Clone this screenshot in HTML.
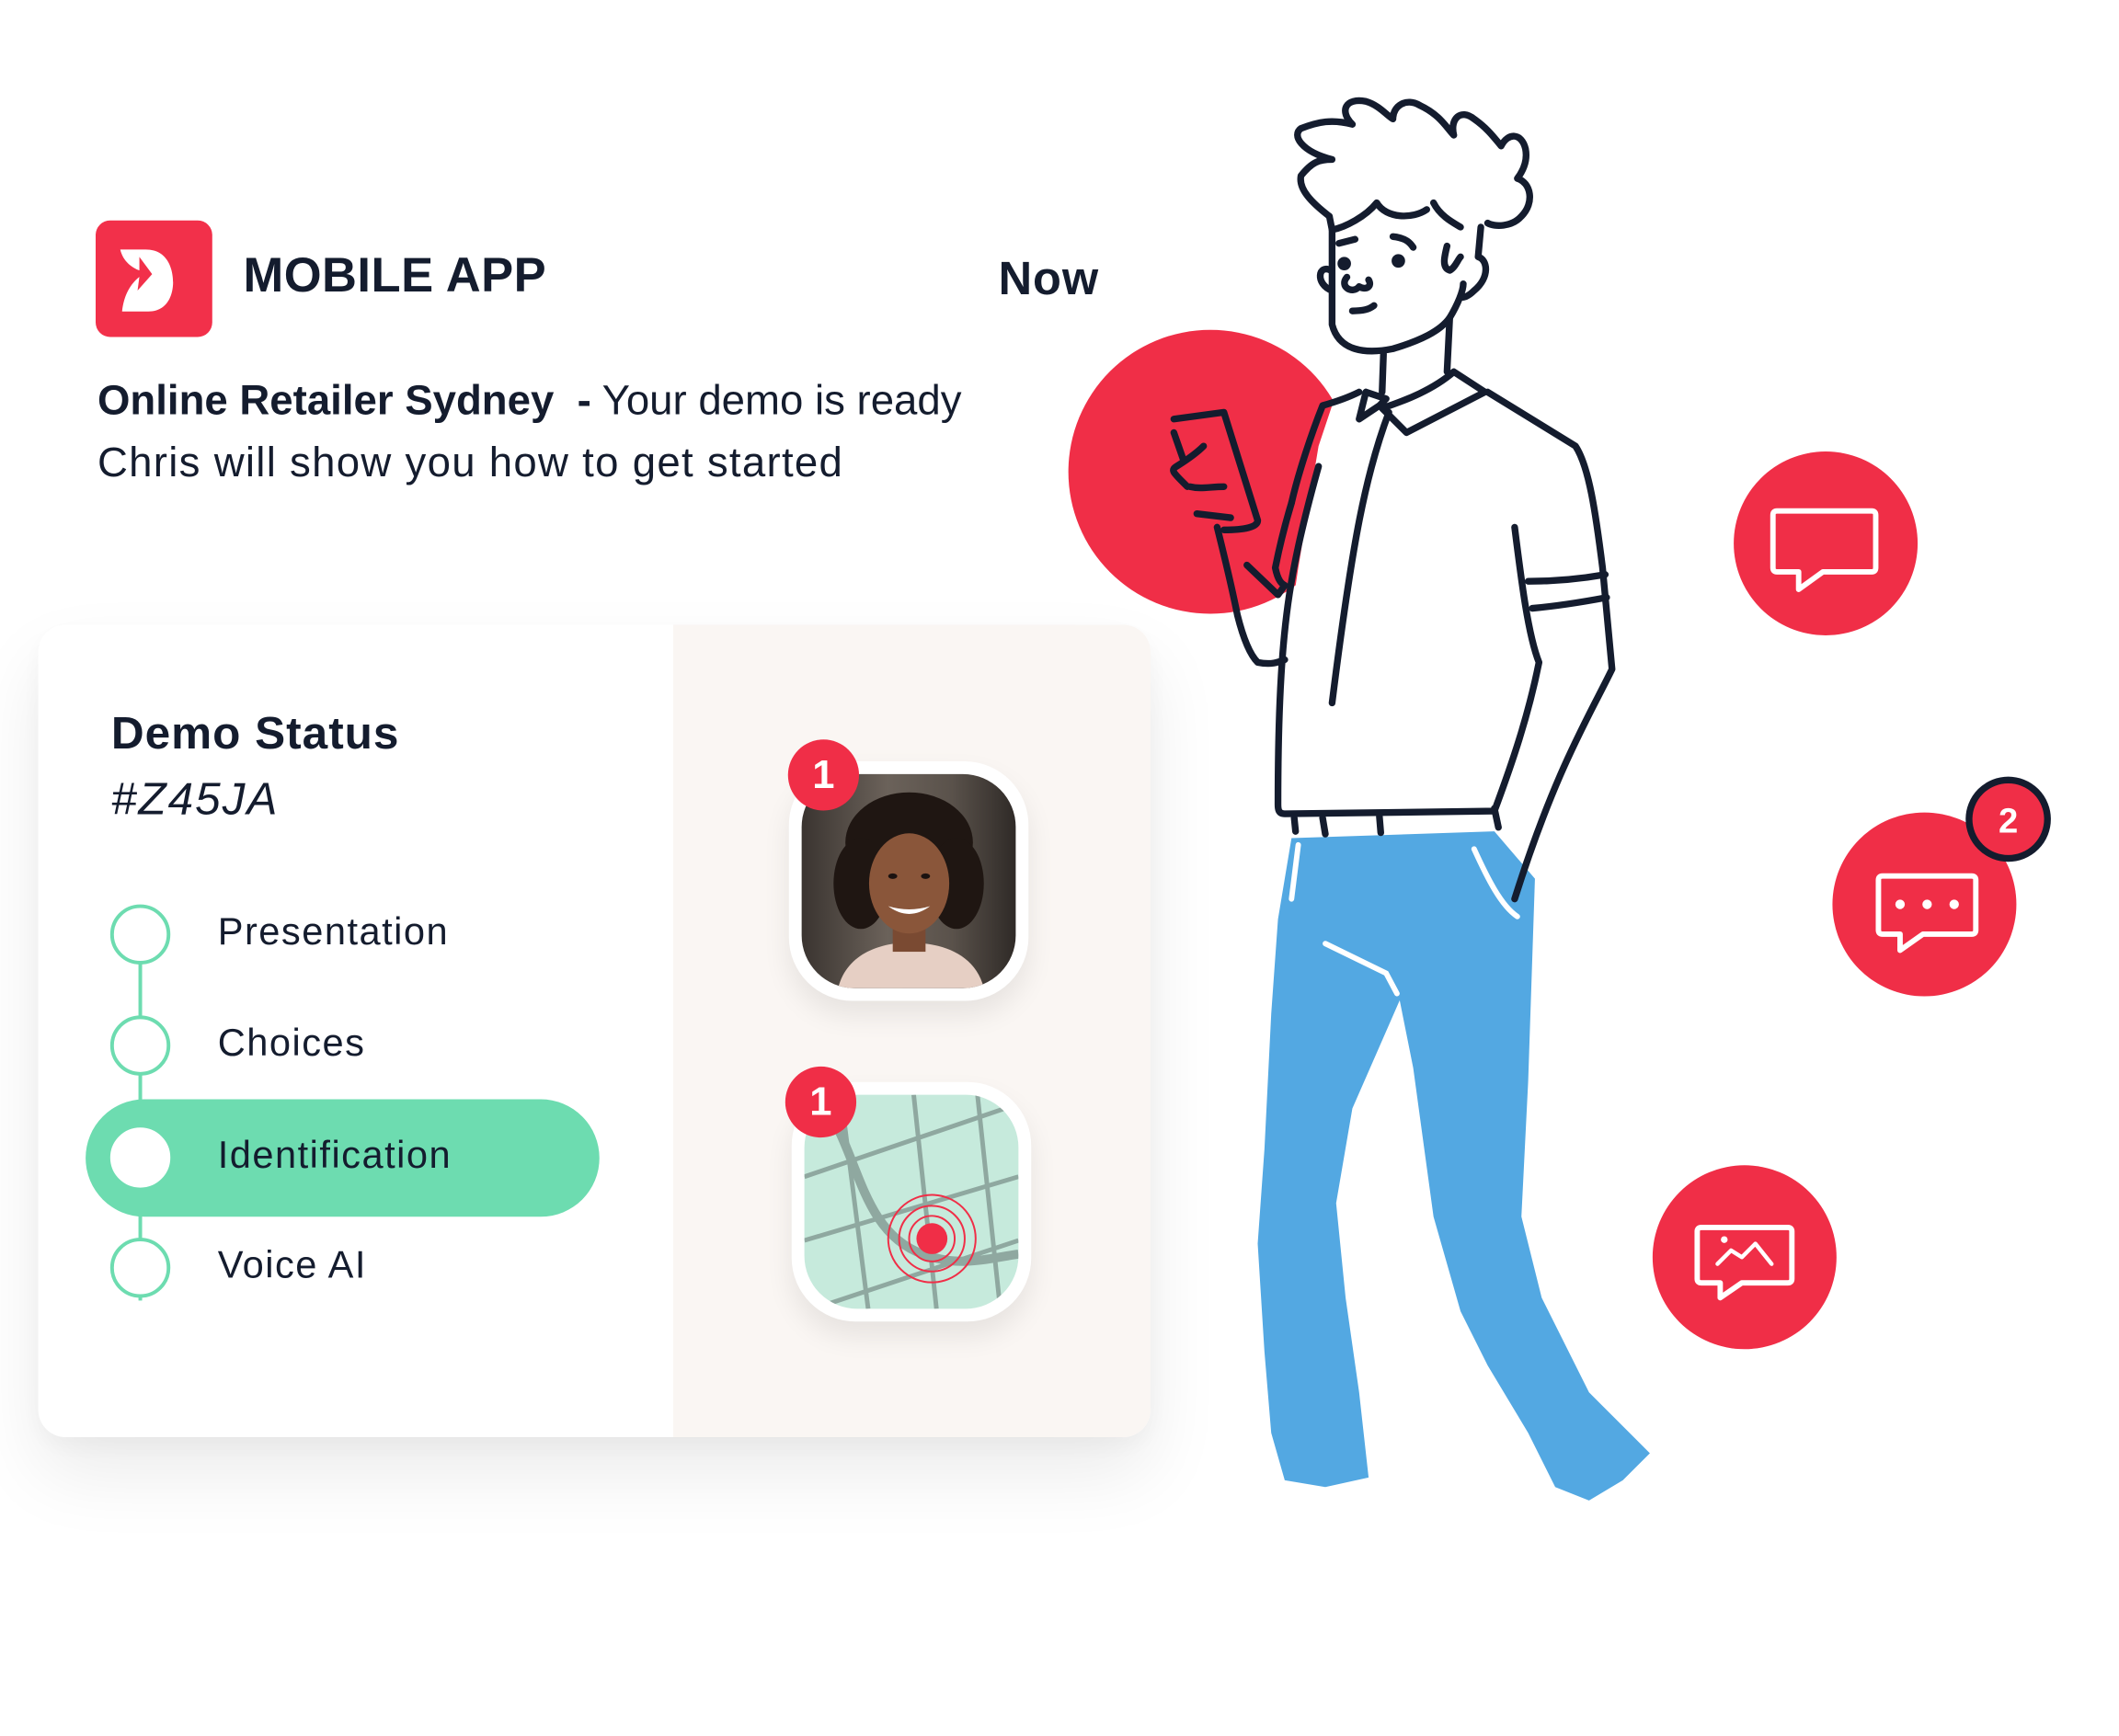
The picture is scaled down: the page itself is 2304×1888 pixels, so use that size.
<!DOCTYPE html>
<html><head><meta charset="utf-8"><style>
*{margin:0;padding:0;box-sizing:border-box}
body{width:2304px;height:1888px;background:#fff;position:relative;overflow:hidden;font-family:"Liberation Sans",sans-serif;color:#141c2e}
#w{position:absolute;left:0;top:0;width:2304px;height:1888px;transform:scale(0.9905);transform-origin:0 0}
.a{position:absolute;white-space:nowrap}
.card{position:absolute;left:42px;top:686px;width:1221px;height:892px;border-radius:30px;background:#fff;overflow:hidden;box-shadow:0 40px 80px rgba(0,0,0,.08),0 10px 30px rgba(0,0,0,.04)}
.card .r{position:absolute;left:697px;top:0;right:0;bottom:0;background:#faf6f3}
.step{position:absolute;left:79px;width:66px;height:66px;border-radius:50%;border:4px solid #6ddcb0;background:#fff}
.lbl{position:absolute;left:197px;font-size:42px;letter-spacing:1.5px}
.tile{position:absolute;width:263px;height:263px;border-radius:70px;background:#fff;box-shadow:0 16px 30px rgba(0,0,0,.08)}
.tile .in{position:absolute;left:14px;top:14px;right:14px;bottom:14px;border-radius:58px;overflow:hidden}
.badge{position:absolute;width:78px;height:78px;border-radius:50%;background:#f02e47;color:#fff;font-weight:bold;font-size:44px;text-align:center;line-height:78px}
</style></head><body><div id="w">

<div class="a" style="left:105px;top:242px;width:128px;height:128px;border-radius:16px;background:#f2304a">
<svg width="128" height="128" viewBox="0 0 128 128"><path d="M27 32 H55 C80 32 85 55 85 68 C85 80 80 100 58 100 H29 C31 82 38 70 48 62 L46 77 L62 59 L48 40 L48 55 C40 52 30 45 27 32Z" fill="#fff"/></svg>
</div>
<div class="a" style="left:267px;top:272px;font-size:53px;font-weight:bold;letter-spacing:0.5px">MOBILE APP</div>
<div class="a" style="left:1096px;top:276px;font-size:51px;font-weight:bold;letter-spacing:1px">Now</div>
<div class="a" style="left:107px;top:412px;font-size:46px"><b>Online Retailer Sydney</b> &nbsp;<b>-</b> Your demo is ready</div>
<div class="a" style="left:107px;top:480px;font-size:46px;letter-spacing:1.3px">Chris will show you how to get started</div>

<div class="card">
<div class="r"></div>
<div class="a" style="left:80px;top:90px;font-size:50px;font-weight:bold;letter-spacing:1px">Demo Status</div>
<div class="a" style="left:80px;top:162px;font-size:50px;font-style:italic;font-weight:300;letter-spacing:2px">#Z45JA</div>
<div class="a" style="left:110px;top:372px;width:4px;height:370px;background:#6ddcb0"></div>
<div class="a" style="left:52px;top:521px;width:564px;height:129px;border-radius:65px;background:#6ddcb0"></div>
<div class="step" style="top:307px"></div><div class="lbl" style="top:313px">Presentation</div>
<div class="step" style="top:429px"></div><div class="lbl" style="top:435px">Choices</div>
<div class="step" style="top:552px;border-color:#fff"></div><div class="lbl" style="top:558px">Identification</div>
<div class="step" style="top:673px"></div><div class="lbl" style="top:679px">Voice AI</div>
</div>

<div class="tile" style="left:866px;top:836px"><div class="in" style="background:linear-gradient(90deg,#3a3430,#6b625a 40%,#5a524b 70%,#2f2a27)">
<svg width="235" height="235" viewBox="0 0 235 235">
<ellipse cx="118" cy="75" rx="70" ry="55" fill="#1f1612"/>
<ellipse cx="65" cy="120" rx="30" ry="50" fill="#1f1612"/><ellipse cx="170" cy="120" rx="30" ry="50" fill="#1f1612"/>
<path d="M40 235 C50 195 90 185 118 185 C150 185 190 195 200 235Z" fill="#e6cfc4"/>
<rect x="100" y="150" width="36" height="45" fill="#7a4a32"/>
<ellipse cx="118" cy="120" rx="44" ry="55" fill="#8a563a"/>
<path d="M95 145 Q118 162 141 145 Q118 152 95 145Z" fill="#fff"/>
<ellipse cx="100" cy="112" rx="5" ry="3" fill="#1b1210"/><ellipse cx="136" cy="112" rx="5" ry="3" fill="#1b1210"/>
</svg></div></div>
<div class="badge" style="left:865px;top:812px">1</div>

<div class="tile" style="left:869px;top:1188px"><div class="in" style="background:#c6eadc">
<svg width="235" height="235" viewBox="0 0 235 235" fill="none" stroke="#8fa8a0">
<path d="M0 90 L235 10 M0 160 L235 90 M10 235 L235 160 M40 0 L70 235 M120 0 L145 235 M190 0 L215 235" stroke-width="5"/>
<path d="M20 10 C60 60 60 150 130 175 C170 190 200 180 235 175" stroke-width="10"/>
<g stroke="#f02e47" stroke-width="2"><circle cx="140" cy="158" r="48"/><circle cx="140" cy="158" r="36"/><circle cx="140" cy="158" r="25"/></g>
<circle cx="140" cy="158" r="17" fill="#f02e47" stroke="none"/>
</svg></div></div>
<div class="badge" style="left:862px;top:1171px">1</div>

<svg class="a" style="left:0;top:0" width="2304" height="1888" viewBox="0 0 1552 1272" preserveAspectRatio="none">
<circle cx="895" cy="349" r="105" fill="#f02e47"/>
<path d="M985 300 L1010 290 L1040 320 L1100 290 L1165 330 L1185 400 L1192 495 L1135 480 L1105 600 L945 600 L945 520 L960 420 L975 330Z" fill="#fff"/>
<path d="M955 620 L1105 615 L1135 650 L1130 800 L1125 900 L1140 960 L1175 1030 L1220 1075 L1200 1095 L1175 1110 L1150 1100 L1130 1060 L1100 1010 L1080 970 L1060 900 L1045 790 L1035 740 L1000 820 L988 890 L995 960 L1005 1030 L1012 1093 L980 1100 L950 1095 L940 1060 L935 1000 L930 920 L935 850 L940 750 L945 680Z" fill="#53a8e2"/>
<g fill="none" stroke="#fff" stroke-width="4" stroke-linecap="round">
<path d="M980 698 L1025 720 L1033 735"/><path d="M960 625 L955 665"/><path d="M1090 628 C1100 650 1110 670 1122 678"/>
</g>
<g fill="none" stroke="#141c2e" stroke-width="5" stroke-linecap="round" stroke-linejoin="round">
<path d="M983 160 C970 150 960 140 962 130 C970 120 975 118 985 118 C962 112 955 100 962 95 C975 90 985 88 1000 92 C990 82 995 72 1010 75 C1020 78 1025 85 1030 88 C1030 78 1040 72 1050 78 C1065 85 1070 95 1075 100 C1072 88 1080 80 1090 88 C1100 95 1105 102 1110 108 C1115 98 1125 98 1128 110 C1130 120 1125 128 1122 132 C1132 135 1135 150 1125 160 C1118 168 1105 168 1100 165"/>
<path d="M983 160 L985 170 C995 168 1010 160 1018 150 C1025 162 1045 162 1055 155"/>
<path d="M1060 150 C1065 160 1075 165 1080 168"/>
<path d="M985 170 L985 240 C990 260 1010 262 1030 258 C1050 252 1065 245 1072 235 C1078 225 1082 215 1082 210"/>
<path d="M1095 168 L1093 190 C1100 192 1102 205 1090 215 C1085 220 1082 220 1080 220"/>
<path d="M984 200 C975 195 972 210 985 215"/>
<path d="M990 180 L1002 177 M1030 175 C1040 176 1043 180 1045 183 M1070 182 C1068 190 1066 198 1072 200 C1076 198 1078 192 1080 190"/>
<circle cx="994" cy="195" r="2.5" fill="#141c2e"/><circle cx="1034" cy="193" r="2.5" fill="#141c2e"/>
<path d="M996 205 C990 212 1000 218 1005 212 C1010 215 1015 212 1012 207"/>
<path d="M1000 230 C1008 230 1012 229 1016 226"/>
<path d="M1023 262 L1022 290 M1072 235 L1070 275"/>
<path d="M1010 290 L1005 310 L1020 300 L1025 295 L1010 290 M1022 302 L1040 320 L1098 290 L1075 275 C1060 288 1040 296 1022 302"/>
<path d="M1005 290 C995 295 985 298 978 300 C970 320 960 350 955 372"/>
<path d="M1100 290 L1165 330 C1175 345 1180 380 1185 420 L1192 495 C1175 530 1150 570 1120 665"/>
<path d="M1130 430 C1150 430 1170 428 1187 425 M1133 450 C1155 448 1172 445 1188 442"/>
<path d="M1120 390 C1125 430 1130 470 1138 490 C1130 530 1118 565 1105 600 L950 602 C945 602 945 598 945 595 C945 520 948 470 955 430 C960 400 968 370 975 345"/>
<path d="M1027 305 C1010 350 1000 400 985 520"/>
<path d="M957 605 L958 615 M978 605 L980 617 M1020 604 L1021 616 M1105 598 L1108 612"/>
<path d="M955 372 C948 395 945 410 943 420 C945 430 948 432 950 433 L945 440 L922 418"/>
<path d="M900 390 C905 410 910 430 915 455 C920 475 925 485 930 490 C940 492 945 490 950 488"/>
<path d="M868 310 L905 305 L930 385 C930 390 920 392 905 392"/>
<path d="M875 340 L868 320 M878 360 C868 350 865 348 870 345 C878 340 885 335 890 330 M880 360 C888 362 895 360 905 360 M885 380 L910 383"/>
</g>
<circle cx="1350" cy="402" r="68" fill="#f02e47"/>
<path d="M1314 378 H1384 Q1387 378 1387 381 V420 Q1387 423 1384 423 H1348 L1330 436 V423 H1314 Q1311 423 1311 420 V381 Q1311 378 1314 378Z" fill="none" stroke="#fff" stroke-width="4" stroke-linejoin="round"/>
<circle cx="1423" cy="669" r="68" fill="#f02e47"/>
<path d="M1392 648 H1458 Q1461 648 1461 651 V688 Q1461 691 1458 691 H1422 L1405 703 V691 H1392 Q1389 691 1389 688 V651 Q1389 648 1392 648Z" fill="none" stroke="#fff" stroke-width="4" stroke-linejoin="round"/>
<circle cx="1405" cy="669" r="3.5" fill="#fff"/><circle cx="1425" cy="669" r="3.5" fill="#fff"/><circle cx="1445" cy="669" r="3.5" fill="#fff"/>
<circle cx="1485" cy="606" r="29" fill="#f02e47" stroke="#141c2e" stroke-width="5"/>
<text x="1485" y="616" fill="#fff" font-family="Liberation Sans" font-weight="bold" font-size="26" text-anchor="middle">2</text>
<circle cx="1290" cy="930" r="68" fill="#f02e47"/>
<path d="M1258 908 H1322 Q1325 908 1325 911 V946 Q1325 949 1322 949 H1288 L1272 960 V949 H1258 Q1255 949 1255 946 V911 Q1255 908 1258 908Z" fill="none" stroke="#fff" stroke-width="4" stroke-linejoin="round"/>
<circle cx="1275" cy="917" r="2.5" fill="#fff"/>
<path d="M1270 935 L1280 925 L1288 930 L1298 920 L1310 935" fill="none" stroke="#fff" stroke-width="3" stroke-linecap="round" stroke-linejoin="round"/>
</svg>
</div></body></html>
